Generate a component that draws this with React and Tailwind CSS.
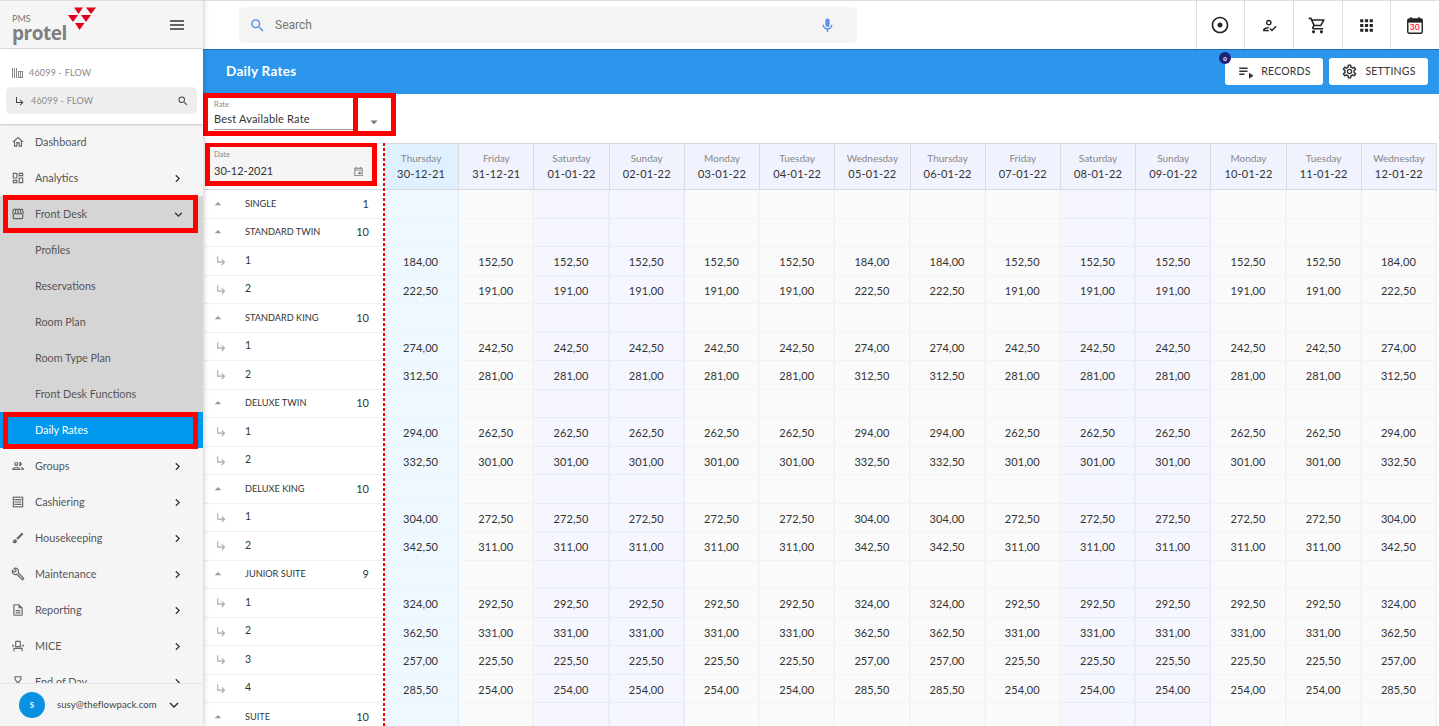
import {
  MdOutlineHome, MdOutlineDashboard, MdOutlineStorefront, MdOutlinePeople, MdOutlineReceipt, MdBrush,
  MdOutlineBuild, MdOutlineDescription, MdOutlineEventSeat, MdOutlineHourglassEmpty, MdChevronRight, MdExpandMore,
  MdSubdirectoryArrowRight, MdSearch, MdOutlineMic, MdOutlineAdjust, MdOutlineHowToReg, MdOutlineShoppingCart,
  MdApps, MdPlaylistPlay, MdOutlineSettings, MdArrowDropDown, MdArrowDropUp, MdOutlineEvent,
} from "react-icons/md";

const FONT = "font-['Lato','Noto_Sans',sans-serif]";

const NAV_TOP = [
  { label: "Dashboard", icon: MdOutlineHome },
  { label: "Analytics", icon: MdOutlineDashboard, arrow: true },
];
const NAV_SUB = ["Profiles", "Reservations", "Room Plan", "Room Type Plan", "Front Desk Functions"];
const NAV_BOTTOM = [
  { label: "Groups", icon: MdOutlinePeople },
  { label: "Cashiering", icon: MdOutlineReceipt },
  { label: "Housekeeping", icon: MdBrush },
  { label: "Maintenance", icon: MdOutlineBuild },
  { label: "Reporting", icon: MdOutlineDescription },
  { label: "MICE", icon: MdOutlineEventSeat },
  { label: "End of Day", icon: MdOutlineHourglassEmpty },
];

const DAYS = [
  ["Thursday", "30-12-21", "today", 1],
  ["Friday", "31-12-21", "plain", 0],
  ["Saturday", "01-01-22", "weekend", 0],
  ["Sunday", "02-01-22", "weekend", 0],
  ["Monday", "03-01-22", "plain", 0],
  ["Tuesday", "04-01-22", "plain", 0],
  ["Wednesday", "05-01-22", "plain", 1],
  ["Thursday", "06-01-22", "plain", 1],
  ["Friday", "07-01-22", "plain", 0],
  ["Saturday", "08-01-22", "weekend", 0],
  ["Sunday", "09-01-22", "weekend", 0],
  ["Monday", "10-01-22", "plain", 0],
  ["Tuesday", "11-01-22", "plain", 0],
  ["Wednesday", "12-01-22", "plain", 1],
];

const ROOMS = [
  { name: "SINGLE", count: 1, rates: [] },
  { name: "STANDARD TWIN", count: 10, rates: [["184,00", "152,50"], ["222,50", "191,00"]] },
  { name: "STANDARD KING", count: 10, rates: [["274,00", "242,50"], ["312,50", "281,00"]] },
  { name: "DELUXE TWIN", count: 10, rates: [["294,00", "262,50"], ["332,50", "301,00"]] },
  { name: "DELUXE KING", count: 10, rates: [["304,00", "272,50"], ["342,50", "311,00"]] },
  {
    name: "JUNIOR SUITE",
    count: 9,
    rates: [["324,00", "292,50"], ["362,50", "331,00"], ["257,00", "225,50"], ["285,50", "254,00"]],
  },
  { name: "SUITE", count: 10, rates: [] },
];

const CELL = {
  today: "bg-[#f0f8ff] border-r-[#e3f3ff] border-b-[#e6f4ff]",
  weekend: "bg-[#f5f6fe] border-r-[#e9ecfc] border-b-[#e9ecfc]",
  plain: "bg-[#fafafa] border-r-[#f3f3f3] border-b-[#f3f3f3]",
};

const GRID = "grid grid-cols-[180px_repeat(14,minmax(0,1fr))]";
const NAV_TEXT = "text-[10.8px] text-[#555]";

const NavItem = ({ item }) => {
  const Icon = item.icon;
  return (
    <div className="flex h-9 shrink-0 items-center pl-[11px] pr-[18px] text-[#666]">
      <Icon size={14} className="w-[14px] shrink-0" />
      <span className={`ml-[10px] flex-1 ${NAV_TEXT}`}>{item.label}</span>
      {item.arrow && <MdChevronRight size={15} className="text-[#333]" />}
    </div>
  );
};

const Sidebar = () => (
  <aside className="z-10 flex w-[203px] shrink-0 flex-col overflow-hidden bg-[#f5f5f5] shadow-[1px_0_5px_rgba(0,0,0,0.2)]">
    <div className="flex h-[49px] shrink-0 items-center justify-between border-y border-[#ddd] pl-[12px] pr-[19px]">
      <div className="relative h-[46px] w-[90px]">
        <span className="absolute left-0 top-[12px] text-[9px] leading-[10px] text-[#777]">PMS</span>
        <span className="absolute left-0 top-[22px] font-['Open_Sans',sans-serif] text-[19px] font-bold leading-[19px] tracking-[-0.5px] text-[#808080]">
          protel
        </span>
        <svg className="absolute left-0 top-0" width="90" height="30" viewBox="0 0 90 30">
          <polygon fill="#e2001a" points="62,5.5 71,5.5 66.5,12" />
          <polygon fill="#e2001a" points="74,5.5 84,5.5 79,12" />
          <polygon fill="#e2001a" points="56,13 66,13 61,20" />
          <polygon fill="#e2001a" points="69,13 79,13 74,20" />
          <polygon fill="#e2001a" points="63,21 72.5,21 67.5,28" />
        </svg>
      </div>
      <svg width="14" height="10" viewBox="0 0 14 10">
        <path d="M0 1h14M0 5h14M0 9h14" stroke="#333" strokeWidth="1.4" />
      </svg>
    </div>

    <div className="z-10 flex h-[75px] shrink-0 flex-col bg-white px-[6px] pt-[16px] shadow-[0_1px_2px_rgba(0,0,0,0.2)]">
      <div className="flex h-[15px] items-center pl-[6px] text-[9px] tracking-[0.2px] text-[#888]">
        <svg width="11" height="10" viewBox="0 0 11 10" className="mr-[6px]">
          <path d="M.5 0v10M2.5 0v10M4.5 0v10M6.5 3v7M8.5 3v7M10.5 3v7M6 9.5h5M6 3.5h5" stroke="#888" fill="none" />
        </svg>
        46099 - FLOW
      </div>
      <div className="mt-[7px] flex h-[27px] items-center rounded-[5px] bg-[#eee] px-[8px] text-[9px] tracking-[0.2px] text-[#888]">
        <MdSubdirectoryArrowRight size={12} className="mr-[5px] text-[#444]" />
        <span className="flex-1">46099 - FLOW</span>
        <MdSearch size={12} className="text-[#444]" />
      </div>
    </div>

    <nav className="min-h-0 flex-1 overflow-hidden">
      {NAV_TOP.map((item) => (
        <NavItem key={item.label} item={item} />
      ))}
      <div className="flex h-9 items-center bg-[#d5d5d5]">
        <div className="ml-[3px] flex h-[38px] w-[195px] shrink-0 items-center border-[5px] border-[#f00] pl-[3px] pr-[7px] text-[#666]">
          <MdOutlineStorefront size={14} className="w-[14px] shrink-0" />
          <span className={`ml-[10px] flex-1 ${NAV_TEXT}`}>Front Desk</span>
          <MdExpandMore size={15} className="text-[#333]" />
        </div>
      </div>
      {NAV_SUB.map((label) => (
        <div key={label} className={`flex h-9 items-center bg-[#d5d5d5] pl-[35px] ${NAV_TEXT}`}>
          {label}
        </div>
      ))}
      <div className="flex h-9 items-center bg-[#0098ee]">
        <div className="ml-[3px] flex h-[37px] w-[195px] shrink-0 items-center border-[5px] border-[#f00] bg-[#0098ee] pl-[27px] text-[10.8px] text-white">
          Daily Rates
        </div>
      </div>
      {NAV_BOTTOM.map((item) => (
        <NavItem key={item.label} item={{ ...item, arrow: true }} />
      ))}
    </nav>

    <div className="flex h-[43px] shrink-0 items-center border-t border-[#e6e6e6] bg-[#f5f5f5] pl-[19px] pr-[20px]">
      <div className="flex h-[26px] w-[26px] items-center justify-center rounded-full bg-[#0a90e0] text-[8px] font-bold text-white">S</div>
      <span className="ml-[12px] flex-1 text-[9.5px] tracking-[0.1px] text-[#444]">susy@theflowpack.com</span>
      <MdExpandMore size={18} className="text-[#333]" />
    </div>
  </aside>
);

const CalendarIcon = () => (
  <span className="relative flex h-[17px] w-[16px]">
    <svg width="16" height="17" viewBox="0 0 16 17">
      <rect x="0.75" y="2" width="14.5" height="14.2" rx="1.5" fill="none" stroke="#222" strokeWidth="1.4" />
      <rect x="1" y="2" width="14" height="3.6" fill="#222" />
      <path d="M4 0v3M12 0v3" stroke="#222" strokeWidth="1.4" />
    </svg>
    <span className="absolute left-[2.5px] top-[5.5px] font-['Liberation_Sans',sans-serif] text-[9px] leading-[10px] text-[#f00]">30</span>
  </span>
);

const TOP_ICONS = [
  <MdOutlineAdjust key="a" size={20} />,
  <MdOutlineHowToReg key="b" size={17} />,
  <MdOutlineShoppingCart key="c" size={19} />,
  <MdApps key="d" size={19} />,
  <CalendarIcon key="e" />,
];

const TopBar = () => (
  <header className="flex h-[49px] shrink-0 items-center border-t border-[#ddd] bg-white pl-[36px]">
    <div className="flex h-9 w-[618px] items-center rounded-[5px] bg-[#f4f4f4] pl-[10px] pr-[21px] font-['Roboto',sans-serif] text-[12px] text-[#777]">
      <MdSearch size={17} className="text-[#5a8fe8]" />
      <span className="ml-[9px] flex-1">Search</span>
      <MdOutlineMic size={17} className="text-[#5a8fe8]" />
    </div>
    <div className="ml-auto flex h-full">
      {TOP_ICONS.map((icon, i) => (
        <div key={i} className="flex w-[48.7px] items-center justify-center border-l border-[#ddd] text-[#222]">
          {icon}
        </div>
      ))}
    </div>
  </header>
);

const TitleBar = () => (
  <div className="flex h-[45px] shrink-0 items-center bg-[#2b96ec] pl-[23px] pr-[11px] shadow-[inset_0_1px_0_#1d6fb5]">
    <h1 className="flex-1 text-[13.5px] font-bold tracking-[0.3px] text-white">Daily Rates</h1>
    <button className="relative flex h-[27px] w-[98px] items-center justify-center rounded-[3px] bg-white text-[10.5px] tracking-[0.2px] text-[#333]">
      <MdPlaylistPlay size={18} className="mr-[6px]" />
      RECORDS
      <span className="absolute -left-[6px] -top-[6px] flex h-3 w-3 items-center justify-center rounded-full bg-[#1a237e] text-[6px] font-bold text-white">0</span>
    </button>
    <button className="ml-[6px] flex h-[27px] w-[99px] items-center justify-center rounded-[3px] bg-white text-[10.5px] tracking-[0.2px] text-[#333]">
      <MdOutlineSettings size={17} className="mr-[7px]" />
      SETTINGS
    </button>
  </div>
);

const RateRow = () => (
  <div className="flex h-[49px] shrink-0 items-start bg-white">
    <div className="-mt-[1px] h-[43px] w-[155px] border-[5px] border-[#f00] pl-[6px] pt-[2px]">
      <div className="text-[7.5px] leading-[10px] text-[#888]">Rate</div>
      <div className="mt-[1px] h-[19px] border-b border-[#999] text-[11px] leading-[16px] tracking-[0.2px] text-[#333]">Best Available Rate</div>
    </div>
    <div className="-mt-[1px] flex h-[43px] w-[38px] items-end justify-center border-[5px] border-l-0 border-[#f00] pr-[2px]">
      <MdArrowDropDown size={18} className="text-[#777]" />
    </div>
  </div>
);

const HeaderRow = () => (
  <div className={`${GRID} h-[47px] shrink-0 border-b border-[#d8dae2]`}>
    <div className="pl-[1px]">
      <div className="h-[44px] w-[172px] -translate-y-[1px] border-[5px] border-[#f00] bg-[#f5f5f5] pl-[4px] pt-[3px]">
        <div className="text-[7.5px] leading-[10px] text-[#888]">Date</div>
        <div className="mt-[3px] flex items-center justify-between pr-[8px] text-[11px] leading-[16px] text-[#333]">
          30-12-2021
          <MdOutlineEvent size={11} className="text-[#777]" />
        </div>
      </div>
    </div>
    {DAYS.map(([day, date, kind]) => (
      <div
        key={date}
        className={`flex flex-col items-center justify-center border-r border-t border-[#d8dae2] ${kind === "today" ? "bg-[#dff1fe]" : "bg-[#f0f2fd]"}`}
      >
        <span className="text-[10px] leading-[15px] text-[#888]">{day}</span>
        <span className="text-[11px] leading-[16px] tracking-[0.2px] text-[#333]">{date}</span>
      </div>
    ))}
  </div>
);

const Row = ({ label, count, values, group }) => (
  <div className={`${GRID} h-[28.5px] shrink-0`}>
    <div className="flex items-center border-b border-[#f0f0f0] pr-[15px] text-[#333]">
      {group ? (
        <MdArrowDropUp size={16} className="ml-[6px] w-[16px] shrink-0 text-[#999]" />
      ) : (
        <MdSubdirectoryArrowRight size={13} className="ml-[11px] w-[13px] shrink-0 text-[#aaa]" />
      )}
      <span className={`flex-1 ${group ? "ml-[19px] text-[9.2px]" : "ml-[17px] text-[10.5px]"}`}>{label}</span>
      {count !== undefined && <span className="text-[11px]">{count}</span>}
    </div>
    {DAYS.map(([, date, kind, high]) => (
      <div
        key={date}
        className={`flex items-center justify-center border-b border-r-2 pt-[3px] text-[11px] tracking-[0.1px] text-[#333] ${CELL[kind]}`}
      >
        {values ? values[high ? 0 : 1] : ""}
      </div>
    ))}
  </div>
);

const RatesTable = () => (
  <div className="relative flex min-h-0 flex-1 flex-col overflow-hidden pl-[1px] pr-[2px]">
    <HeaderRow />
    <div className="min-h-0 flex-1 overflow-hidden">
      {ROOMS.map((room) => (
        <div key={room.name}>
          <Row label={room.name} count={room.count} group />
          {room.rates.map((values, i) => (
            <Row key={i} label={i + 1} values={values} />
          ))}
        </div>
      ))}
    </div>
    {/* "today" marker running down over the grid */}
    <div className="absolute bottom-0 left-[180px] top-0 w-[2px] bg-[repeating-linear-gradient(to_bottom,#ff0000_0,#ff0000_3px,transparent_3px,transparent_5px)]" />
  </div>
);

export default function App() {
  return (
    <div className={`${FONT} flex h-[726px] w-[1439px] overflow-hidden bg-white`}>
      <Sidebar />
      <main className="flex min-w-0 flex-1 flex-col">
        <TopBar />
        <TitleBar />
        <RateRow />
        <RatesTable />
      </main>
    </div>
  );
}
